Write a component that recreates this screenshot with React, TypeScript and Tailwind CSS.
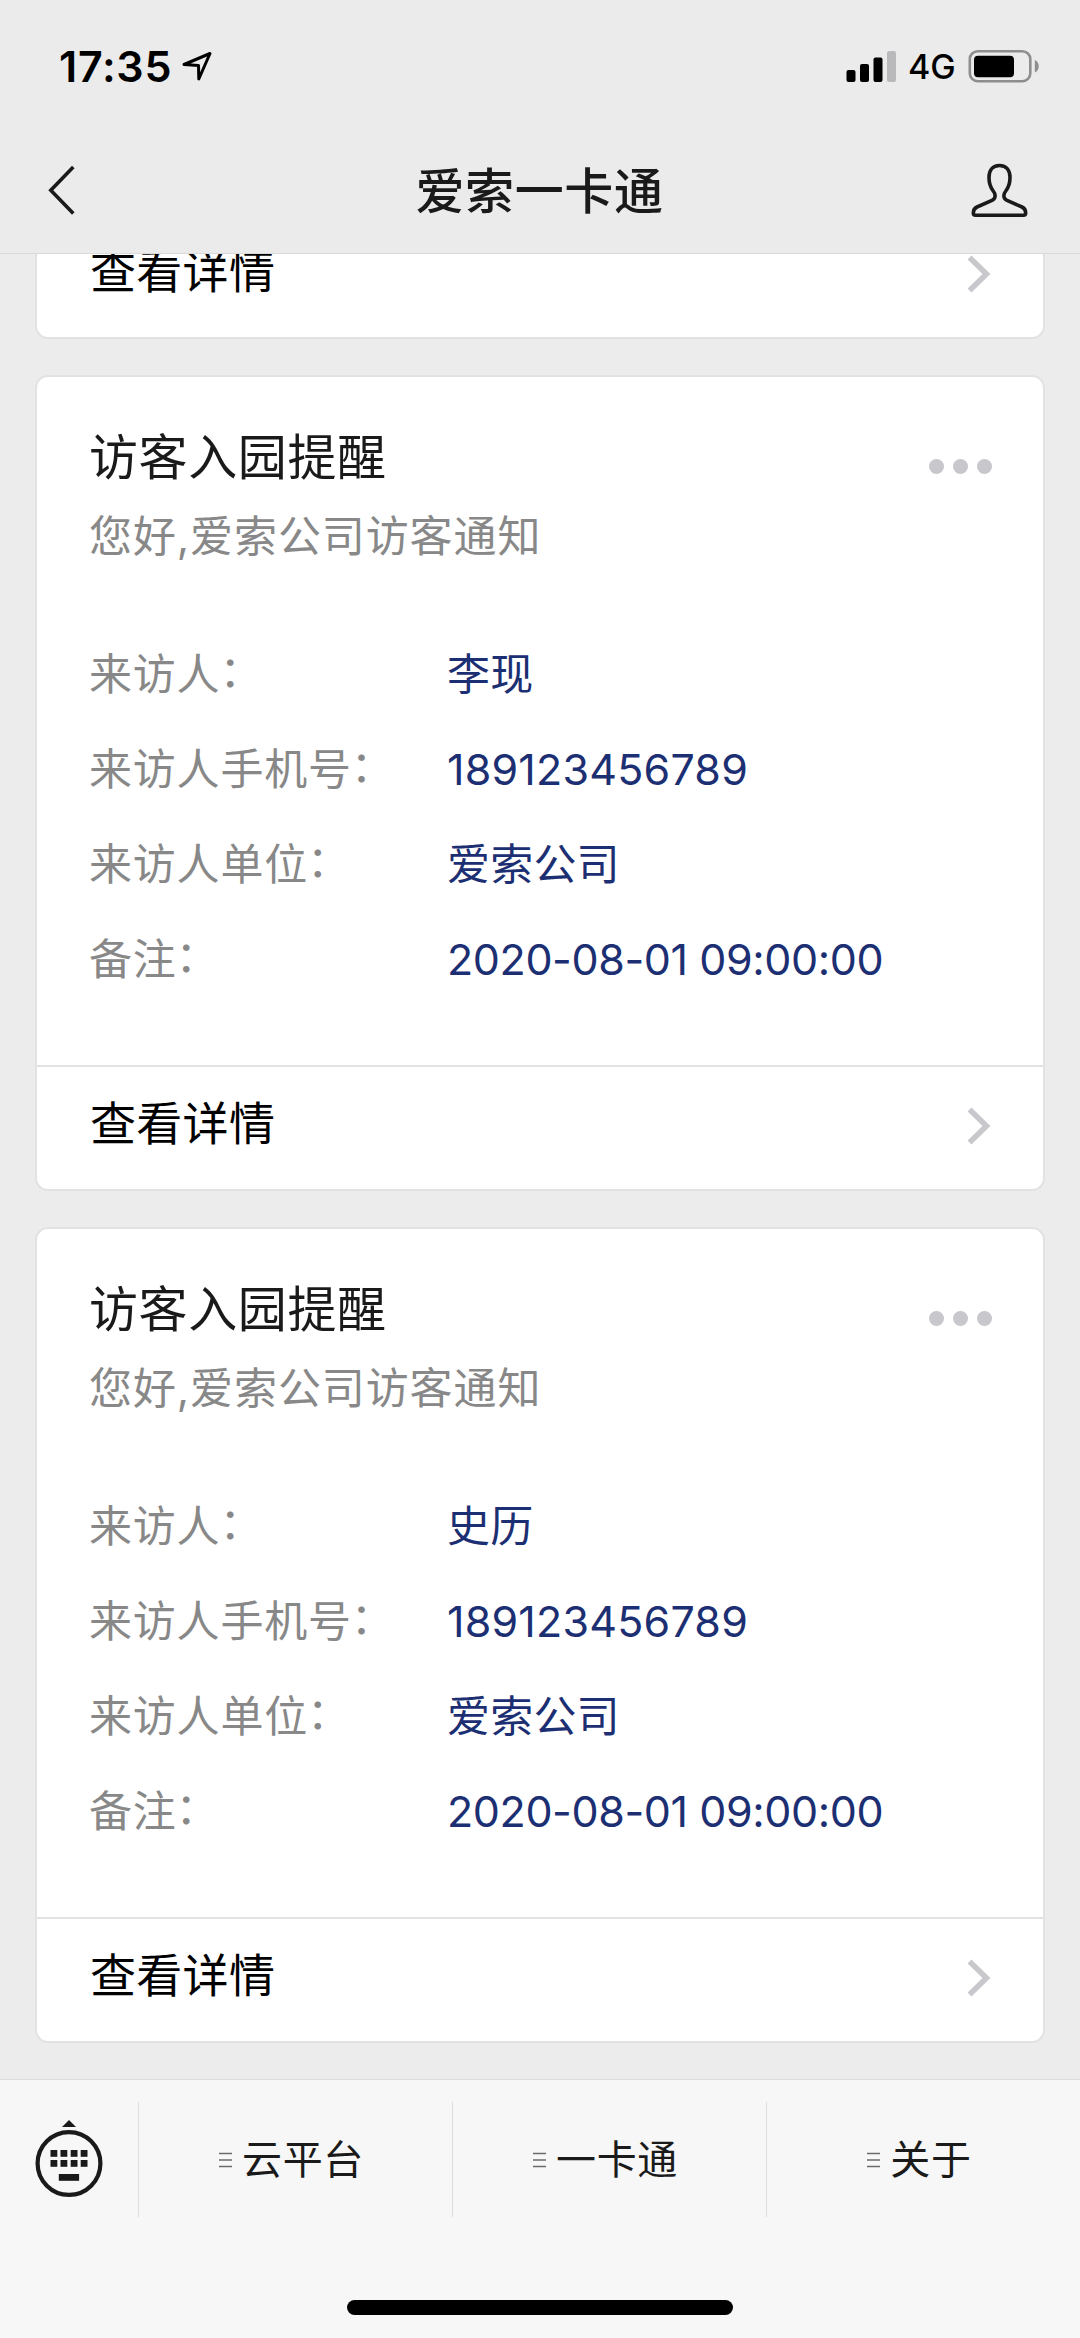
import React from "react";

const notices = [
  {
    title: "访客入园提醒",
    subtitle: "您好,爱索公司访客通知",
    rows: [
      { label: "来访人", value: "李现" },
      { label: "来访人手机号", value: "189123456789" },
      { label: "来访人单位", value: "爱索公司" },
      { label: "备注", value: "2020-08-01 09:00:00", tight: true },
    ],
  },
  {
    title: "访客入园提醒",
    subtitle: "您好,爱索公司访客通知",
    rows: [
      { label: "来访人", value: "史历" },
      { label: "来访人手机号", value: "189123456789" },
      { label: "来访人单位", value: "爱索公司" },
      { label: "备注", value: "2020-08-01 09:00:00", tight: true },
    ],
  },
];

const menus = ["云平台", "一卡通", "关于"];

function StatusBar() {
  return (
    <div className="flex h-[132px] items-center justify-between pl-[59px] pr-10">
      <div className="flex items-center">
        <span className="text-[43px] font-semibold leading-none tracking-[0.7px] text-black">17:35</span>
        <svg width="32" height="32" viewBox="0 0 32 32" className="ml-[9px]" fill="none">
          <path
            d="M29 3.5 L3 14.5 L17.5 15.5 L17.8 29 Z"
            stroke="#000"
            strokeWidth="3"
            strokeLinejoin="round"
          />
        </svg>
      </div>
      <div className="flex items-center">
        <svg width="50" height="34" viewBox="0 0 50 34">
          <rect x="0.5" y="21" width="9" height="12" rx="2" fill="#000" />
          <rect x="14" y="15" width="9" height="18" rx="2" fill="#000" />
          <rect x="27.5" y="8.5" width="9" height="24.5" rx="2" fill="#000" />
          <rect x="41" y="2" width="9" height="31" rx="2" fill="#b9b9bb" />
        </svg>
        <span className="ml-3 w-[60px] pt-[2px] text-[34px] font-medium leading-none text-black">4G</span>
        <svg width="72" height="34" viewBox="0 0 72 34">
          <rect x="1.8" y="2.2" width="60.5" height="30" rx="8" fill="none" stroke="#8e8e8e" strokeWidth="2.6" />
          <rect x="6" y="6.7" width="40" height="21.5" rx="4" fill="#000" />
          <path d="M66.8 11 C72 13 72 21.5 66.8 23.5 Z" fill="#8e8e8e" />
        </svg>
      </div>
    </div>
  );
}

function NavBar() {
  return (
    <div className="flex h-[121px] items-start justify-between pl-[48px] pr-[49px] pt-[28px]">
      <svg width="60" height="60" viewBox="0 0 60 60" fill="none">
        <path d="M25.3 7 L2.8 30.2 L25.3 53.4" stroke="#1a1a1a" strokeWidth="3.6" />
      </svg>
      <h1 className="mt-[2px] text-[49px] font-medium leading-[60px] tracking-[0.6px] text-[#1a1a1a]">爱索一卡通</h1>
      <svg width="60" height="60" viewBox="0 0 60 60" fill="none">
        <path
          d="M28.5 5.5 C21.5 5.5 18 10.5 18 17.5 C18 24 19.5 27.5 22.2 31 C25 34.5 24.8 38.6 21 40.4 L6 47 C2.8 48.4 2.3 50 2.3 53 C2.3 54.7 3 55.2 4.5 55.2 H52.5 C54 55.2 54.7 54.7 54.7 53 C54.7 50 54.2 48.4 51 47 L36 40.4 C32.2 38.6 32 34.5 34.8 31 C37.5 27.5 39 24 39 17.5 C39 10.5 35.5 5.5 28.5 5.5 Z"
          stroke="#1a1a1a"
          strokeWidth="3.6"
        />
      </svg>
    </div>
  );
}

function DetailLink() {
  return (
    <div className="flex h-[122px] items-center justify-between pb-[4px] pl-[53px] pr-[50px]">
      <span className="-mt-[6px] text-[46px] leading-[60px] tracking-[0.3px] text-black">查看详情</span>
      <svg width="28" height="40" viewBox="0 0 28 40" fill="none">
        <path d="M4.5 3.5 L21.5 20 L4.5 36.5" stroke="#c7c7cc" strokeWidth="5.5" />
      </svg>
    </div>
  );
}

function NoticeCard({ notice }: { notice: (typeof notices)[number] }) {
  return (
    <div className="h-[816px] shrink-0 rounded-[13px] border-2 border-[#e2e2e2] bg-white">
      <div className="flex h-[688px] flex-col border-b-2 border-[#e2e2e2] box-content pl-[52px] pr-[51px]">
        <div className="flex justify-between pt-[49px]">
          <h2 className="text-[49px] leading-[64px] tracking-[0.6px] text-[#1a1a1a]">{notice.title}</h2>
          <div className="flex gap-[9px] pt-[33px]">
            <i className="size-[15px] rounded-full bg-[#c7c7cc]" />
            <i className="size-[15px] rounded-full bg-[#c7c7cc]" />
            <i className="size-[15px] rounded-full bg-[#c7c7cc]" />
          </div>
        </div>
        <p className="mt-[16px] text-[43px] leading-[60px] tracking-[0.9px] text-[#888888]">{notice.subtitle}</p>
        <div className="mt-[60px]">
          {notice.rows.map((row) => (
            <div key={row.label} className="flex h-[95px] items-center text-[43px] leading-[60px]">
              <span className="w-[358px] tracking-[0.8px] text-[#888888]">
                {row.label}
                <span className="relative -left-px -top-[3px]">：</span>
              </span>
              <span className={row.tight ? "tracking-[-0.4px] text-[#1d2f73]" : "tracking-[0.2px] text-[#1d2f73]"}>
                {row.value}
              </span>
            </div>
          ))}
        </div>
      </div>
      <DetailLink />
    </div>
  );
}

function KeyboardIcon() {
  return (
    <svg width="72" height="82" viewBox="0 0 72 82">
      <path d="M36 2 L43 9 H29 Z" fill="#1a1a1a" />
      <circle cx="36" cy="45.5" r="31.4" fill="none" stroke="#1a1a1a" strokeWidth="4.2" />
      {[17.5, 27.5, 37.7, 47.7].map((x) => (
        <g key={x} fill="#1a1a1a">
          <rect x={x} y="32" width="6.8" height="6.8" />
          <rect x={x} y="42" width="6.8" height="6.8" />
        </g>
      ))}
      <rect x="25.8" y="56" width="20.3" height="6.8" fill="#1a1a1a" />
    </svg>
  );
}

function BottomBar() {
  return (
    <div className="flex h-[259px] shrink-0 flex-col border-t border-[#dcdcdc] bg-[#f7f7f7]">
      <div className="mt-[22px] flex h-[115px]">
        <div className="flex w-[138px] items-center justify-center pb-[2px]">
          <KeyboardIcon />
        </div>
        {menus.map((menu) => (
          <div key={menu} className="flex flex-1 items-center justify-center border-l border-[#dedede] pr-2">
            <svg width="13" height="16" viewBox="0 0 13 16" stroke="#6b6b6b" strokeWidth="1.3">
              <path d="M0 1.5 H13 M0 8 H13 M0 14.5 H13" />
            </svg>
            <span className="ml-[10px] text-[40px] leading-[60px] tracking-[0.7px] text-[#1a1a1a]">{menu}</span>
          </div>
        ))}
      </div>
      <div className="mx-auto mt-[83px] h-[15px] w-[386px] rounded-full bg-black" />
    </div>
  );
}

export default function App() {
  return (
    <div className="flex h-[2338px] w-[1080px] flex-col overflow-hidden bg-[#ececec] font-['Inter','Noto_Sans_CJK_SC',sans-serif]">
      <header className="h-[254px] shrink-0 border-b border-[#dadada] bg-[#ebebeb]">
        <StatusBar />
        <NavBar />
      </header>
      <main className="flex min-h-0 flex-1 flex-col justify-end gap-9 overflow-hidden px-[35px] pb-9">
        {/* tail of the previous notice, scrolled under the header */}
        <div className="shrink-0 rounded-b-[13px] border-2 border-t-0 border-[#e2e2e2] bg-white">
          <DetailLink />
        </div>
        {notices.map((notice, index) => (
          <NoticeCard key={index} notice={notice} />
        ))}
      </main>
      <BottomBar />
    </div>
  );
}
